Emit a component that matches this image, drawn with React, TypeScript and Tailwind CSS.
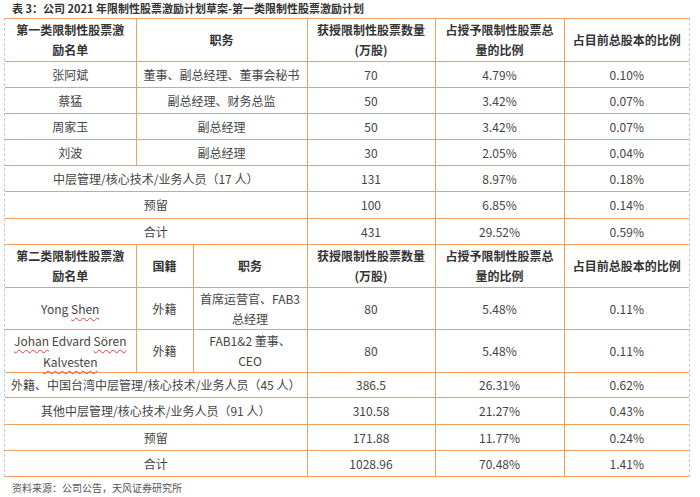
import { ReactNode } from 'react'

const line = 'border border-[#f3a05f] first:border-l-0 last:border-r-0'
const cell = `${line} text-center align-middle px-[4px] text-[12px] text-[#444]`
const head = `${line} text-center align-middle px-[4px] text-[12px] font-semibold text-[#333] leading-[20px]`

// first section: name, duties (spans 2 cols), amount, share of grant, share of total
const officers = [
  ['张阿斌', '董事、副总经理、董事会秘书', '70', '4.79%', '0.10%'],
  ['蔡猛', '副总经理、财务总监', '50', '3.42%', '0.07%'],
  ['周家玉', '副总经理', '50', '3.42%', '0.07%'],
  ['刘波', '副总经理', '30', '2.05%', '0.04%'],
]

const groupOne = [
  ['中层管理/核心技术/业务人员（17 人）', '131', '8.97%', '0.18%'],
  ['预留', '100', '6.85%', '0.14%'],
  ['合计', '431', '29.52%', '0.59%'],
]

const groupTwo = [
  ['外籍、中国台湾中层管理/核心技术/业务人员（45 人）', '386.5', '26.31%', '0.62%', 'h-[25px]'],
  ['其他中层管理/核心技术/业务人员（91 人）', '310.58', '21.27%', '0.43%', 'h-[27px]'],
  ['预留', '171.88', '11.77%', '0.24%', 'h-[26px]'],
  ['合计', '1028.96', '70.48%', '1.41%', 'h-[26px]'],
]

function Wavy({ children }: { children: ReactNode }) {
  return <span className="underline decoration-wavy decoration-[#e0403a] decoration-1 underline-offset-[3px]">{children}</span>
}

function NumberCells({ values }: { values: string[] }) {
  return (
    <>
      {values.map((v, i) => (
        <td key={i} className={cell}>{v}</td>
      ))}
    </>
  )
}

export default function App() {
  return (
    <div className="w-[700px] h-[497px] bg-white overflow-hidden" style={{ fontFamily: '"Noto Sans CJK SC", "Noto Sans", sans-serif' }}>
      <div className="pl-[12px] h-[18px] pt-[1px] text-[11px] leading-[15px] font-bold text-[#333]">
        表 3：公司 2021 年限制性股票激励计划草案-第一类限制性股票激励计划
      </div>

      <div className="ml-[4px] w-[686px] border-x border-dashed border-[#c8c8c8]">
        <table className="w-[684px] border-collapse table-fixed">
          <colgroup>
            <col className="w-[131px]" />
            <col className="w-[57px]" />
            <col className="w-[114px]" />
            <col className="w-[128px]" />
            <col className="w-[129px]" />
            <col className="w-[125px]" />
          </colgroup>
          <tbody>
            {/* first grant header */}
            <tr className="h-[43px]">
              <td className={head}>第一类限制性股票激<br />励名单</td>
              <td className={head} colSpan={2}>职务</td>
              <td className={head}>获授限制性股票数量<br />(万股)</td>
              <td className={head}>占授予限制性股票总<br />量的比例</td>
              <td className={head}>占目前总股本的比例</td>
            </tr>
            {officers.map((r) => (
              <tr key={r[0]} className="h-[26px]">
                <td className={cell}>{r[0]}</td>
                <td className={cell} colSpan={2}>{r[1]}</td>
                <NumberCells values={r.slice(2)} />
              </tr>
            ))}
            {groupOne.map((r, i) => (
              <tr key={r[0]} className={i === 1 ? 'h-[27px]' : 'h-[26px]'}>
                <td className={cell} colSpan={3}>{r[0]}</td>
                <NumberCells values={r.slice(1)} />
              </tr>
            ))}

            {/* second grant header */}
            <tr className="h-[43px]">
              <td className={head}>第二类限制性股票激<br />励名单</td>
              <td className={head}>国籍</td>
              <td className={head}>职务</td>
              <td className={head}>获授限制性股票数量<br />(万股)</td>
              <td className={head}>占授予限制性股票总<br />量的比例</td>
              <td className={head}>占目前总股本的比例</td>
            </tr>
            <tr className="h-[42px]">
              <td className={cell}>Yong <Wavy>Shen</Wavy></td>
              <td className={cell}>外籍</td>
              <td className={`${cell} leading-[20px]`}>首席运营官、FAB3<br />总经理</td>
              <NumberCells values={['80', '5.48%', '0.11%']} />
            </tr>
            <tr className="h-[43px]">
              <td className={`${cell} leading-[21px]`}>
                <Wavy>Johan</Wavy> Edvard <Wavy>Sören</Wavy>
                <br />
                <Wavy>Kalvesten</Wavy>
              </td>
              <td className={cell}>外籍</td>
              <td className={`${cell} leading-[20px]`}>FAB1&amp;2 董事、<br />CEO</td>
              <NumberCells values={['80', '5.48%', '0.11%']} />
            </tr>
            {groupTwo.map((r) => (
              <tr key={r[0]} className={r[4]}>
                <td className={cell} colSpan={3}>{r[0]}</td>
                <NumberCells values={r.slice(1, 4)} />
              </tr>
            ))}
          </tbody>
        </table>
      </div>

      <div className="pl-[12px] pt-[4px] text-[10px] leading-[14px] text-[#555]">
        资料来源：公司公告，天风证券研究所
      </div>
    </div>
  )
}
